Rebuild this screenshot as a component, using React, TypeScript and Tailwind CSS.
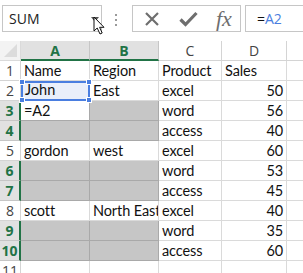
import React from "react";

type Cell = { text?: string; gray?: boolean; num?: boolean; active?: boolean; sel?: boolean };

const rows: { n: number; sel: boolean; cells: Cell[] }[] = [
  { n: 1, sel: false, cells: [{ text: "Name" }, { text: "Region" }, { text: "Product" }, { text: "Sales" }] },
  { n: 2, sel: false, cells: [{ text: "John", sel: true }, { text: "East" }, { text: "excel" }, { text: "50", num: true }] },
  { n: 3, sel: true, cells: [{ text: "=A2", active: true }, { gray: true }, { text: "word" }, { text: "56", num: true }] },
  { n: 4, sel: true, cells: [{ gray: true }, { gray: true }, { text: "access" }, { text: "40", num: true }] },
  { n: 5, sel: false, cells: [{ text: "gordon" }, { text: "west" }, { text: "excel" }, { text: "60", num: true }] },
  { n: 6, sel: true, cells: [{ gray: true }, { gray: true }, { text: "word" }, { text: "53", num: true }] },
  { n: 7, sel: true, cells: [{ gray: true }, { gray: true }, { text: "access" }, { text: "45", num: true }] },
  { n: 8, sel: false, cells: [{ text: "scott" }, { text: "North East" }, { text: "excel" }, { text: "40", num: true }] },
  { n: 9, sel: true, cells: [{ gray: true }, { gray: true }, { text: "word" }, { text: "35", num: true }] },
  { n: 10, sel: true, cells: [{ gray: true }, { gray: true }, { text: "access" }, { text: "60", num: true }] },
  { n: 11, sel: false, cells: [{}, {}, {}, {}] },
];

const cols = [
  { l: "A", sel: true },
  { l: "B", sel: true },
  { l: "C", sel: false },
  { l: "D", sel: false },
];

function Handle({ pos }: { pos: string }) {
  return <div className={`absolute h-[6px] w-[6px] border border-white bg-[#4a7ee0] ${pos}`} />;
}

function DataCell({ c }: { c: Cell }) {
  if (c.gray) {
    return <div className="h-[20px] border-b border-r border-[#a9a9a9] bg-[#c6c6c6]" />;
  }
  if (c.sel) {
    return (
      <div className="relative flex h-[20px] items-end border-2 border-[#4a7ee0] bg-[#eaeffa] pl-[2px] text-[14.5px] leading-[18px] text-[#111]">
        {c.text}
        <Handle pos="-left-[4px] -top-[4px]" />
        <Handle pos="-right-[4px] -top-[4px]" />
        <Handle pos="-bottom-[4px] -left-[4px]" />
        <Handle pos="-bottom-[4px] -right-[4px]" />
      </div>
    );
  }
  return (
    <div
      className={`flex h-[20px] items-end overflow-hidden whitespace-nowrap border-b border-r ${
        c.active ? "border-[#a9a9a9] bg-white" : "border-[#dadada]"
      } ${c.num ? "justify-end pr-[3px]" : "pl-[3px]"} text-[14.5px] leading-[19px] tracking-[-0.1px] text-[#111]`}
    >
      {c.text}
    </div>
  );
}

export default function App() {
  return (
    <div className="relative h-[273px] w-[303px] overflow-hidden bg-white font-['Lato','Liberation_Sans',sans-serif]">
      {/* formula bar */}
      <div className="flex h-[41px] items-start pt-[5px]">
        <div className="relative ml-[2px] flex h-[27px] w-[100px] items-center border border-[#c6c6c6] pl-[6px] font-['Open_Sans',sans-serif] text-[14px] text-[#222]">
          SUM
          <div className="absolute left-[88px] top-[11px] h-0 w-0 border-l-[4px] border-r-[4px] border-t-[5px] border-l-transparent border-r-transparent border-t-[#555]" />
          <svg className="absolute left-[90px] top-[10px]" width="14" height="20" viewBox="0 0 14 20">
            <path d="M1 1 L1 15 L4.2 12 L7 18 L9.2 17 L6.6 11.3 L11 11.3 Z" fill="white" stroke="#111" strokeWidth="1" strokeLinejoin="round" />
          </svg>
        </div>
        <div className="ml-[13px] mt-[9px] flex flex-col gap-[3px]">
          <div className="h-[2px] w-[2px] bg-[#9a9a9a]" />
          <div className="h-[2px] w-[2px] bg-[#9a9a9a]" />
          <div className="h-[2px] w-[2px] bg-[#9a9a9a]" />
        </div>
        <div className="ml-[15px] flex h-[27px] w-[109px] items-center border border-[#c6c6c6]">
          <svg className="ml-[11px]" width="16" height="16" viewBox="0 0 16 16">
            <path d="M2 2 L14 14 M14 2 L2 14" stroke="#6e6e6e" strokeWidth="2.2" />
          </svg>
          <svg className="ml-[19px]" width="19" height="16" viewBox="0 0 19 16">
            <path d="M1.5 8.5 L6.5 13.5 L17.5 2" stroke="#6e6e6e" strokeWidth="3.2" fill="none" />
          </svg>
          <span className="ml-[18px] font-['Liberation_Serif',serif] text-[22px] italic leading-none text-[#6e6e6e]">fx</span>
        </div>
        <div className="ml-[4px] flex h-[27px] flex-1 items-center border-y border-l border-[#c6c6c6] pl-[11px] font-['Open_Sans',sans-serif] text-[14px]">
          <span className="text-[#111]">=</span>
          <span className="text-[#4a7ee0]">A2</span>
        </div>
      </div>

      {/* grid */}
      <div className="grid grid-cols-[21px_69px_69px_63px_65px_1fr]">
        <div className="relative h-[20px] border-b border-r border-[#dadada] bg-[#f3f3f3]">
          <div className="absolute bottom-[3px] right-[3px] h-0 w-0 border-b-[13px] border-l-[13px] border-b-[#dcdcdc] border-l-transparent" />
        </div>
        {cols.map((c) => (
          <div
            key={c.l}
            className={`flex h-[20px] items-center justify-center border-r font-['Open_Sans',sans-serif] text-[14px] ${
              c.sel
                ? "border-b-2 border-r-[#c6c6c6] border-b-[#217346] bg-[#e1e1e1] font-bold text-[#217346]"
                : "border-b border-[#d4d4d4] bg-white text-[#444]"
            }`}
          >
            {c.l}
          </div>
        ))}
        <div className="h-[20px] border-b border-[#d4d4d4] bg-white" />

        {rows.map((r) => (
          <React.Fragment key={r.n}>
            <div
              className={`flex h-[20px] items-center justify-center border-b font-['Open_Sans',sans-serif] text-[14px] ${
                r.sel
                  ? "border-r-2 border-b-[#c6c6c6] border-r-[#217346] bg-[#e1e1e1] font-bold text-[#217346]"
                  : "border-r border-[#d4d4d4] text-[#444]"
              }`}
            >
              {r.n}
            </div>
            {r.cells.map((c, i) => (
              <DataCell key={i} c={c} />
            ))}
            <div className="h-[20px] border-b border-[#dadada]" />
          </React.Fragment>
        ))}
      </div>
    </div>
  );
}
